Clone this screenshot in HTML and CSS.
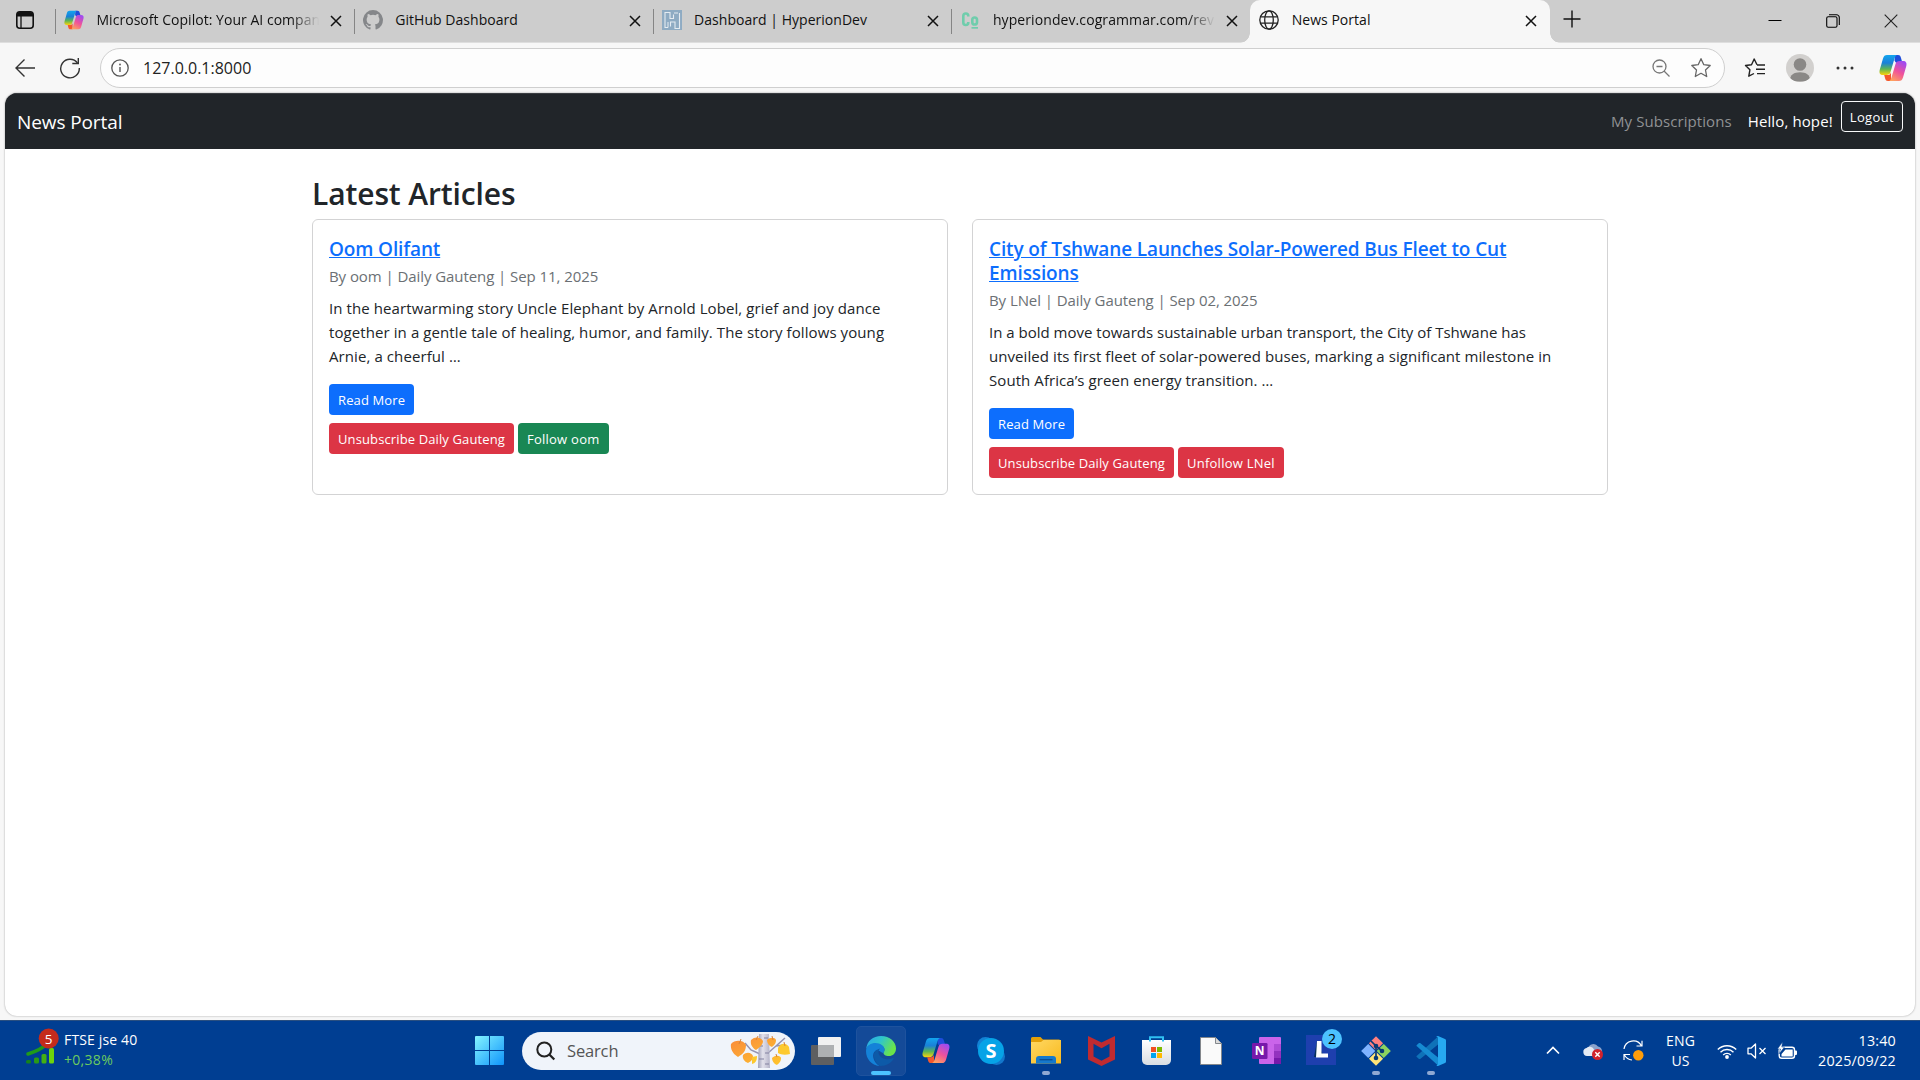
FILE: index.html
```html
<!DOCTYPE html>
<html lang="en">
<head>
<meta charset="utf-8">
<title>News Portal</title>
<link rel="stylesheet" href="styles.css">
</head>
<body>
<svg class="defs" width="0" height="0" aria-hidden="true">
  <defs>
    <linearGradient id="cpBlue" x1="0" y1="0" x2="0" y2="1"><stop offset="0" stop-color="#12a5ee"/><stop offset=".4" stop-color="#1a80d8"/><stop offset=".7" stop-color="#5cb554"/><stop offset="1" stop-color="#fcd20b"/></linearGradient>
    <linearGradient id="cpPink" x1="0.7" y1="0" x2="0.2" y2="1"><stop offset="0" stop-color="#a04bf0"/><stop offset=".5" stop-color="#f0529a"/><stop offset="1" stop-color="#ffa45c"/></linearGradient>
    <linearGradient id="win" x1="0" y1="0" x2="1" y2="1"><stop offset="0" stop-color="#84f4ff"/><stop offset="1" stop-color="#0f94fb"/></linearGradient>
    <linearGradient id="edgeTop" x1="0" y1="0" x2="1" y2=".4"><stop offset="0" stop-color="#2aa5ea"/><stop offset=".5" stop-color="#2fc5cc"/><stop offset="1" stop-color="#6be34a"/></linearGradient>
    <linearGradient id="folder" x1="0" y1="0" x2="1" y2="1"><stop offset="0" stop-color="#ffd863"/><stop offset="1" stop-color="#f8b91d"/></linearGradient>
    <linearGradient id="bag" x1="0" y1="0" x2="0" y2="1"><stop offset="0" stop-color="#fff"/><stop offset="1" stop-color="#d9dde2"/></linearGradient>
    <linearGradient id="leaf" x1="0" y1="0" x2="1" y2="1"><stop offset="0" stop-color="#f98a3c"/><stop offset="1" stop-color="#ffc52b"/></linearGradient>
    <linearGradient id="bark" x1="0" y1="0" x2="1" y2="0"><stop offset="0" stop-color="#9fa0b8"/><stop offset=".4" stop-color="#e3e2ec"/><stop offset="1" stop-color="#b4b3c8"/></linearGradient>
    <symbol id="copilot" viewBox="0 0 28 28">
      <path d="M16 1h3c2 0 2.500 1.200 3 3l1 3.500c.5 1.600 1.200 2 2 2h-5.500c-2 0-3-1-4-3z" fill="#1e4ddb"/>
      <path d="M8 1h10c-1.500.6-2 2-2.500 3.500L11.500 18c-.7 2.200-2 3-4 3H4c-3 0-4-2-3.300-5L4 4.500C4.700 2 6 1 8 1z" fill="url(#cpBlue)"/>
      <path d="M12 27H9c-2 0-2.500-1.200-3-3l-.8-3H8c2 0 3 0 4-2.500z" fill="#f4572d"/>
      <path d="M20 27H10c1.500-.6 2-2 2.500-3.500L16.500 10c.7-2.200 2-3 4-3H24c3 0 4 2 3.300 5L24 23.500c-.7 2.500-2 3.500-4 3.500z" fill="url(#cpPink)"/>
    </symbol>
    <symbol id="x" viewBox="0 0 12 12"><path d="M1 1l10 10M11 1L1 11" fill="none" stroke="currentColor" stroke-width="1.500"/></symbol>
  </defs>
</svg>

<header class="tabstrip">
  <div class="tab-actions"><svg width="20" height="20" viewBox="0 0 20 20"><rect x="1.800" y="1.800" width="16.400" height="16.400" rx="3" fill="none" stroke="#111" stroke-width="1.600"/><path d="M2 5a3 3 0 013-3h10a3 3 0 013 3v1.500H2z" fill="#111"/><path d="M6 6v12" stroke="#111" stroke-width="1.300"/></svg></div>
  <div class="tab">
    <svg class="fav" width="20" height="20"><use href="#copilot"/></svg>
    <span class="tab-title fade">Microsoft Copilot: Your AI compan</span>
    <svg class="close" width="12" height="12"><use href="#x"/></svg>
  </div>
  <div class="tab">
    <svg class="fav" width="20" height="20" viewBox="0 0 16 16"><path fill="#85878a" d="M8 0a8 8 0 00-2.530 15.590c.4.070.55-.17.55-.38v-1.490C4 14.090 3.480 13.220 3.320 12.770c-.09-.23-.48-.94-.82-1.130-.28-.15-.68-.52-.01-.53.630-.01 1.080.58 1.230.82.720 1.210 1.870.87 2.330.66.070-.52.280-.87.510-1.070-1.780-.2-3.640-.89-3.640-3.950 0-.87.310-1.590.82-2.150-.08-.2-.36-1.020.08-2.120 0 0 .670-.21 2.200.82a7.500 7.500 0 014 0c1.530-1.040 2.200-.82 2.200-.82.440 1.100.16 1.920.08 2.120.51.560.82 1.270.82 2.150 0 3.070-1.870 3.750-3.650 3.950.290.250.540.73.540 1.480v2.190c0 .21.150.46.550.38A8 8 0 008 0z"/></svg>
    <span class="tab-title">GitHub Dashboard</span>
    <svg class="close" width="12" height="12"><use href="#x"/></svg>
  </div>
  <div class="tab">
    <svg class="fav" width="20" height="20" viewBox="0 0 20 20"><path d="M0 0h20v20H0z" fill="#8eabc3"/><path d="M3 18V2.500h5v6h3.500V4.500M17.500 3v15.500H13v-6.500H8.500v4.500M12 3h4" fill="none" stroke="#e4ebf1" stroke-width="1.100"/><path d="M3 17.500h3V12" fill="none" stroke="#e4ebf1"/></svg>
    <span class="tab-title">Dashboard | HyperionDev</span>
    <svg class="close" width="12" height="12"><use href="#x"/></svg>
  </div>
  <div class="tab">
    <svg class="fav" width="20" height="20" viewBox="0 0 20 20"><g fill="none" stroke="#6fcdac" stroke-width="2.600"><path d="M8.300 6.500V6a2.500 2.500 0 00-5 0v6.500a2.500 2.500 0 005 0V12"/><rect x="12.300" y="7.500" width="4.700" height="7" rx="2.350"/></g><path d="M11.500 17h6.500v1.700h-6.500z" fill="#6fcdac"/></svg>
    <span class="tab-title fade wide">hyperiondev.cogrammar.com/revi</span>
    <svg class="close" width="12" height="12"><use href="#x"/></svg>
  </div>
  <div class="tab active">
    <svg class="fav" width="20" height="20" viewBox="0 0 20 20"><g fill="none" stroke="#222" stroke-width="1.300"><circle cx="10" cy="10" r="9.200"/><ellipse cx="10" cy="10" rx="4.300" ry="9.200"/><path d="M1.500 6.800h17M1.500 13.200h17"/></g></svg>
    <span class="tab-title">News Portal</span>
    <svg class="close" width="12" height="12"><use href="#x"/></svg>
  </div>
  <svg class="new-tab" width="18" height="18" viewBox="0 0 18 18"><path d="M9 .5v17M.5 9h17" stroke="#111" stroke-width="1.400"/></svg>
  <div class="window-buttons">
    <svg width="14" height="14" viewBox="0 0 14 14"><path d="M.5 6.500h13" stroke="#000"/></svg>
    <svg width="14" height="14" viewBox="0 0 14 14"><g fill="none" stroke="#000" stroke-width="1.100"><rect x=".7" y="2.700" width="10.300" height="10.600" rx="1.500"/><path d="M3 .8h7.500a2.800 2.800 0 012.800 2.800V11"/></g></svg>
    <svg width="14" height="14" viewBox="0 0 14 14"><path d="M.7.700l12.600 12.600M13.300.700L.7 13.300" stroke="#222" stroke-width="1.100"/></svg>
  </div>
</header>

<div class="toolbar">
  <svg class="back" width="22" height="20" viewBox="0 0 22 20"><path d="M10.500 1.500L2 10l8.500 8.500M2 10h19" fill="none" stroke="#333" stroke-width="1.400"/></svg>
  <svg class="reload" width="22" height="22" viewBox="0 0 22 22"><path d="M18.500 6A9.300 9.300 0 1020.300 11" fill="none" stroke="#333" stroke-width="1.400"/><path d="M19.300 1v5.500h-6" fill="none" stroke="#333" stroke-width="1.400"/></svg>
  <div class="address">
    <svg width="18" height="18" viewBox="0 0 18 18"><circle cx="9" cy="9" r="8.200" fill="none" stroke="#555" stroke-width="1.300"/><path d="M9 8v5" stroke="#555" stroke-width="1.400"/><circle cx="9" cy="5.500" r=".9" fill="#555"/></svg>
    <span class="url">127.0.0.1:8000</span>
    <svg class="zoom-out" width="18" height="18" viewBox="0 0 18 18"><g fill="none" stroke="#777" stroke-width="1.300"><circle cx="7.500" cy="7.500" r="6.500"/><path d="M12 12l5.500 5.500M4.500 7.500h6"/></g></svg>
    <svg width="22" height="22" viewBox="0 0 22 22"><path d="M11 1.700l2.800 6 6.400.8-4.700 4.500 1.200 6.500L11 16.300l-5.700 3.200 1.200-6.500L1.800 8.500l6.400-.8z" fill="none" stroke="#666" stroke-width="1.300" stroke-linejoin="round"/></svg>
  </div>
  <svg class="favorites" width="22" height="22" viewBox="0 0 22 22"><path d="M13 7.800L10.200 2 7.500 7.700l-6 .8 4.400 4.300-1.100 6.400L10 16.500M13 8h8M12 12.300h9M13 16.600h8" fill="none" stroke="#222" stroke-width="1.400" stroke-linejoin="round"/></svg>
  <svg class="avatar" width="28" height="28" viewBox="0 0 28 28"><defs><clipPath id="face"><circle cx="14" cy="14" r="14"/></clipPath></defs><g clip-path="url(#face)"><path d="M0 0h28v28H0z" fill="#d2d0ce"/><circle cx="14" cy="10.500" r="6.300" fill="#8a8886"/><path d="M4 26c0-5 4-7.700 10-7.700s10 2.700 10 7.700l-5 1.500H9z" fill="#8a8886"/></g></svg>
  <svg class="dots" width="18" height="4" viewBox="0 0 18 4"><g fill="#333"><circle cx="2" cy="2" r="1.500"/><circle cx="9" cy="2" r="1.500"/><circle cx="16" cy="2" r="1.500"/></g></svg>
  <svg width="28" height="28"><use href="#copilot"/></svg>
</div>

<main class="viewport">
  <nav class="navbar">
    <a class="brand">News Portal</a>
    <a class="nav-link">My Subscriptions</a>
    <span class="hello">Hello, hope!</span>
    <button class="btn btn-outline">Logout</button>
  </nav>
  <div class="container">
    <h2>Latest Articles</h2>
    <div class="row">
      <article class="card">
        <h5><a>Oom Olifant</a></h5>
        <p class="meta">By oom | Daily Gauteng | Sep 11, 2025</p>
        <p class="text loose">In the heartwarming story Uncle Elephant by Arnold Lobel, grief and joy dance<br>together in a gentle tale of healing, humor, and family. The story follows young<br>Arnie, a cheerful …</p>
        <a class="btn btn-primary">Read More</a>
        <div class="actions"><button class="btn btn-danger">Unsubscribe Daily Gauteng</button><button class="btn btn-success short">Follow oom</button></div>
      </article>
      <article class="card">
        <h5><a>City of Tshwane Launches Solar-Powered Bus Fleet to Cut<br>Emissions</a></h5>
        <p class="meta">By LNel | Daily Gauteng | Sep 02, 2025</p>
        <p class="text">In a bold move towards sustainable urban transport, the City of Tshwane has<br><span class="loose">unveiled its first fleet of solar-powered buses, marking a significant milestone in</span><br><span class="loose">South Africa’s green energy transition. …</span></p>
        <a class="btn btn-primary">Read More</a>
        <div class="actions"><button class="btn btn-danger">Unsubscribe Daily Gauteng</button><button class="btn btn-danger short">Unfollow LNel</button></div>
      </article>
    </div>
  </div>
</main>

<footer class="taskbar">
  <div class="widget">
    <svg width="34" height="38" viewBox="0 0 34 38"><path d="M2 27q13-4 20-11" fill="none" stroke="#1f9a1a" stroke-width="3.500" stroke-linecap="round"/><rect x="0" y="33" width="5" height="3.500" rx="1.500" fill="#15831b"/><rect x="8" y="30.500" width="5" height="6" rx="1.500" fill="#2a9a17"/><rect x="15.500" y="27" width="5" height="9.500" rx="1.500" fill="#44b012"/><rect x="23" y="21" width="5" height="15.500" rx="1.500" fill="#6ed40b"/><circle cx="22.700" cy="11.500" r="10" fill="#c42b1c"/><text x="22.700" y="16.500" text-anchor="middle" font-size="13.500" fill="#fff">5</text></svg>
    <div class="quote"><span>FTSE jse 40</span><span class="up">+0,38%</span></div>
  </div>
  <div class="apps">
    <div class="start"><svg width="29" height="29" viewBox="0 0 29 29"><path d="M1 0h13v14H0V1a1 1 0 011-1zM15 0h13a1 1 0 011 1v13H15zM0 15h14v14H1a1 1 0 01-1-1zM15 15h14v13a1 1 0 01-1 1H15z" fill="url(#win)"/></svg></div>
    <div class="search">
      <svg width="20" height="20" viewBox="0 0 20 20"><circle cx="8.300" cy="8.500" r="7" fill="none" stroke="#222" stroke-width="2"/><path d="M13.300 13.500l5 5" stroke="#222" stroke-width="2.300"/></svg>
      <span>Search</span>
      <svg class="birch" width="60" height="34" viewBox="0 0 60 34"><g fill="none" stroke="#9493b0" stroke-width="1.500"><path d="M30 20l-9-4-6-7M38 19l8-7 9-8M46 12l8-1"/></g><path d="M29 0h10l1 34H28z" fill="url(#bark)"/><path d="M34 4h4M29 12h4M35 19h4M29 25h5M35 30h4" stroke="#8281a0"/><g fill="url(#leaf)"><path d="M1 10c4-5 13-4 15 1 0 6-3 9-8 12C4 21 0 16 1 10zM21 6c4-4 10-3 12 1 0 4-4 7-7 9-3-2-6-5-5-10zM37 6c3-3 8-3 9 0 0 4-2 5-4 7-3-1-5-4-5-7zM13 21c4-4 9-2 10 1 0 4-3 6-5 7-3-1-6-4-5-8zM42 24c4-4 9-2 9 0 0 4-2 5-4 7-3-1-5-4-5-7z"/></g><path d="M48 14c3-6 9-5 11-1l1 7c-4 1-9 1-12-1zM22 23l5-1c0 4-1 7-5 8z" fill="#fdc92e"/><path d="M9 10l2-5M26 6l2-4M43 6l-1-4M55 12l-1-4M47 23l-1-3" stroke="#d8843c"/></svg>
    </div>
    <div class="app view"><svg width="30" height="28" viewBox="0 0 30 28"><rect x="0" y="8" width="23" height="20" rx="1" fill="#5e5f61"/><rect x="7" y="0" width="23" height="20" rx="1" fill="#f1f1f1"/><path d="M7 8h16v12H7z" fill="#aeb0b2"/></svg></div>
    <div class="app current"><svg width="30" height="30" viewBox="0 0 30 30"><path d="M.2 13C1 5 7 0 15 0c9 0 15 6 15 12.500 0 5-3.500 7.500-7 7.500-4 0-5.500-1.600-5.500-3 0-1 1-1.400 1-3.500C18.500 10 14 8 9.500 8 4 8 .8 11 .2 13z" fill="url(#edgeTop)"/><path d="M.2 13C1 9.500 5 7 9.500 7c5 0 9 3 9 6.500 0 2-1 2.500-1 3.500-2 0-3.500-3.500-8-2-4 2-3 11 4 14.900C5.500 29.500 0 23 0 15z" fill="#1482d8"/><path d="M9.800 14.200C6 18 8 27 14.500 30c6 0 10.500-3 13-7 .5-1-.3-1.200-1-.8C21 25 13 22 12.500 16.500c0-1.500.7-3 1.500-4z" fill="#0d5aa8"/></svg><i class="mark wide"></i></div>
    <div class="app"><svg width="28" height="27" viewBox="0 0 28 28" preserveAspectRatio="none"><use href="#copilot"/></svg></div>
    <div class="app"><svg width="28" height="28" viewBox="0 0 28 28"><circle cx="8.500" cy="8.500" r="8.500" fill="#1382d4"/><circle cx="19.500" cy="19.500" r="8.500" fill="#1277cc"/><circle cx="14" cy="14" r="13" fill="#06a3e7"/><text class="letter" x="14" y="21" text-anchor="middle" font-size="20" fill="#fff">S</text></svg></div>
    <div class="app"><svg width="30" height="27" viewBox="0 0 30 27"><path d="M0 1.500A1.500 1.500 0 011.500 0h8L12 2.500h16A1.500 1.500 0 0129.500 4v5H0z" fill="#e3a008"/><path d="M0 5h10l2.500-2H30v23.500H0z" fill="url(#folder)"/><path d="M5 26.500V22a3 3 0 013-3h14a3 3 0 013 3v4.500z" fill="#1579cc"/><path d="M8.500 22.700h13" stroke="#0b4c91" stroke-width="1.300"/></svg><i class="mark"></i></div>
    <div class="app"><svg width="27" height="30" viewBox="0 0 27 30"><path d="M0 0l13.500 6.500L27 0v23.500L13.500 30 0 23.500zM5.500 7.800v12.600l8 4.300 8-4.300V7.800l-8 4.500z" fill="#c02b30"/></svg></div>
    <div class="app"><svg width="29" height="29" viewBox="0 0 29 29"><path d="M8 6V1.200h13V6" fill="none" stroke="#2fc0f2" stroke-width="2"/><path d="M0 4h29v20a5 5 0 01-5 5H5a5 5 0 01-5-5z" fill="url(#bag)"/><path d="M8 5.500V2.500M21 5.500V2.500" stroke="#2fc0f2" stroke-width="2"/><path d="M9 11h5v5H9z" fill="#f25022"/><path d="M15 11h5v5h-5z" fill="#7fba00"/><path d="M9 17h5v5H9z" fill="#00a4ef"/><path d="M15 17h5v5h-5z" fill="#ffb900"/></svg></div>
    <div class="app"><svg width="22" height="28" viewBox="0 0 22 28"><path d="M.5.500h15l6 6v21H.5z" fill="#fafafa" stroke="#83878c"/><path d="M15.500.5v6h6" fill="#dcdcdc" stroke="#83878c"/></svg></div>
    <div class="app"><svg width="29" height="28" viewBox="0 0 29 28"><rect x="7" y="0" width="22" height="27" rx="1" fill="#ca64ea"/><path d="M22 7h7v7h-7z" fill="#ae4bd5"/><path d="M22 14h7v7h-7z" fill="#9332bf"/><path d="M22 21h7v6h-7z" fill="#7719aa"/><rect x="0" y="6" width="15.500" height="16" rx="1.200" fill="#7719aa"/><text class="letter" x="7.600" y="18.300" text-anchor="middle" font-size="12" fill="#fff">N</text></svg></div>
    <div class="app"><svg class="over" width="38" height="38" viewBox="0 0 38 38"><path d="M1 7h30v30H1z" fill="#1e3fae"/><path d="M12 13l-3 16h10z" fill="#07305a"/><path d="M12 13h4.500v12.500H23V29.500H11z" fill="#fff"/><circle cx="27" cy="11" r="10" fill="#4cc2ff"/><text x="27" y="16" text-anchor="middle" font-size="14" fill="#000">2</text></svg></div>
    <div class="app"><svg width="30" height="30" viewBox="0 0 30 30"><g transform="translate(15 15) rotate(45)"><path d="M-10.500-10.500h10v10h-10z" fill="#ff7f7f"/><path d="M.5-10.500h10v10H.5z" fill="#8cd25f"/><path d="M-10.500.5h10v10h-10z" fill="#80b3ff"/><path d="M.5.5h10v10H.5z" fill="#ffe478"/></g><path d="M10 5l5 5v12M15 10l6 5" fill="none" stroke="#083a75" stroke-width="1.700"/><g fill="#083a75"><circle cx="15" cy="10" r="2.300"/><circle cx="15" cy="22" r="2.300"/><circle cx="21" cy="15" r="2.300"/></g></svg><i class="mark"></i></div>
    <div class="app"><svg width="30" height="30" viewBox="0 0 30 30"><path d="M1.500 19.300L22 .5v8L4.500 22.700c-.6.500-1.300.5-1.800 0L.8 21.100c-.6-.5-.5-1.200.7-1.800z" fill="#0f72b8"/><path d="M1.500 10.700L22 29.500v-8L4.500 7.300c-.6-.5-1.300-.5-1.800 0L.8 8.900c-.6.5-.5 1.200.7 1.800z" fill="#168bd2"/><path d="M22 0l7 3c.6.300 1 .8 1 1.500v21c0 .7-.4 1.200-1 1.500l-7 3c-1 0-1.500-.5-2-1 1 .6 2 0 2-1.200V2.200C22 1 21 .5 20 1c.5-.6 1-1 2-1z" fill="#27a9f1"/></svg><i class="mark"></i></div>
  </div>
  <div class="tray">
    <svg width="14" height="9" viewBox="0 0 14 9"><path d="M1 7.500l6-6 6 6" fill="none" stroke="#fff" stroke-width="1.700"/></svg>
    <svg class="cloud" width="20" height="18" viewBox="0 0 20 18"><path d="M5 6.500a5.500 5.500 0 0110-2 5 5 0 012 9H7z" fill="#8ba3cc"/><path d="M4 14a4 4 0 01-.5-7.900 4.500 4.500 0 017.500 1.500l4 6.400z" fill="#e4eaf4"/><circle cx="14.500" cy="12.500" r="5.500" fill="#d1222c"/><path d="M12.300 10.300l4.400 4.400M16.700 10.300l-4.400 4.400" stroke="#fff" stroke-width="1.400"/></svg>
    <svg class="sync" width="21" height="21" viewBox="0 0 21 21"><path d="M1 9A9.300 9.300 0 0118.500 6M13.500 6H19V.700M1 20v-5.500h6M1.500 15A9.500 9.500 0 009 20" fill="none" stroke="#fff" stroke-width="1.200"/><circle cx="15.300" cy="15.300" r="5.200" fill="#ff9d0a"/></svg>
    <div class="lang"><span>ENG</span><span>US</span></div>
    <svg class="wifi" width="20" height="16" viewBox="0 0 20 16"><g fill="none" stroke="#fff" stroke-width="1.400"><path d="M.8 6.500a13 13 0 0118.400 0M3.500 9.200a9.200 9.200 0 0113 0M6.200 11.900a5.400 5.400 0 017.600 0"/></g><circle cx="10" cy="14" r="1.900" fill="#fff"/></svg>
    <svg class="sound" width="20" height="16" viewBox="0 0 20 16"><path d="M1 5.200h3L8.500 1v14L4 10.800H1z" fill="none" stroke="#fff" stroke-width="1.300" stroke-linejoin="round"/><path d="M12.500 5l6 6M18.500 5l-6 6" stroke="#fff" stroke-width="1.300"/></svg>
    <svg class="battery" width="21" height="18" viewBox="0 0 21 18"><rect x="2.200" y="5.200" width="15.300" height="11" rx="2.500" fill="none" stroke="#fff" stroke-width="1.400"/><path d="M4.500 14.500V12l4-4.500h7.200v7zM18 8.500h1a1 1 0 011 1V12a1 1 0 01-1 1h-1z" fill="#fff"/><path d="M5.500 0L.5 7h3L2 12l5.500-7H4.800z" fill="#fff" stroke="#003e92" stroke-width=".5"/></svg>
    <div class="clock"><span>13:40</span><span>2025/09/22</span></div>
  </div>
</footer>
</body>
</html>
```

FILE: styles.css
```css
* { box-sizing: border-box; }
html, body { margin: 0; height: 100%; overflow: hidden; }
body {
  width: 1920px;
  height: 1080px;
  display: flex;
  flex-direction: column;
  background: #f7f7f7;
  color: #212529;
  font: 15px "Open Sans", "Noto Sans", sans-serif;
  white-space: nowrap;
}
.defs { position: absolute; }
svg { display: block; flex: none; }
p, h2, h5 { margin: 0; }

/* Tab strip */
.tabstrip {
  height: 43px;
  flex: none;
  display: flex;
  align-items: stretch;
  background: #cdcdcd;
  border-bottom: 1px solid #dedede;
}
.tab-actions { width: 55px; padding: 10px 0 0 15px; }
.tab {
  width: 298.800px;
  flex: none;
  display: flex;
  align-items: flex-start;
  padding: 10px 12px 0 9px;
  background: linear-gradient(#858585, #858585) 0 9px / 1px 25px no-repeat;
}
.tab-title {
  flex: 1;
  margin: -1px 4px 0 12.500px;
  min-width: 0;
  font-size: 14px;
  line-height: 21px;
  letter-spacing: .03px;
  color: #111;
}
.fade { mask-image: linear-gradient(90deg, #000 85%, transparent 97%); }
.fade.wide { letter-spacing: .09px; }
.close { margin-top: 5px; color: #111; }
.tab.active {
  position: relative;
  width: 300px;
  height: 43px;
  background: #f7f7f7;
  border-radius: 10px 10px 0 0;
  padding-left: 9px;
  padding-right: 13px;
}
.tab.active::before, .tab.active::after {
  content: "";
  position: absolute;
  bottom: 0;
  width: 10px;
  height: 10px;
}
.tab.active::before { left: -10px; background: radial-gradient(circle at 0 0, transparent 9.500px, #f7f7f7 10px); }
.tab.active::after { right: -10px; background: radial-gradient(circle at 100% 0, transparent 9.500px, #f7f7f7 10px); }
.new-tab { margin: 10px 0 0 13px; }
.window-buttons { display: flex; gap: 44px; margin: 14px 22px 0 auto; }

/* Toolbar */
.toolbar {
  height: 50px;
  flex: none;
  display: flex;
  align-items: center;
  padding: 0 13px 0 14px;
}
.reload { margin-left: 23px; }
.address {
  width: 1625px;
  height: 40px;
  margin: 0 19px 0 19px;
  display: flex;
  align-items: center;
  padding: 0 12px 0 10px;
  background: #fdfdfd;
  border: 1px solid #cfcfcf;
  border-radius: 20px;
}
.url { flex: 1; margin-left: 14px; font-size: 16px; letter-spacing: 0; color: #222; }
.zoom-out { margin-right: 20px; }
.favorites { margin-right: 20px; }
.avatar { margin-right: 22px; }
.dots { margin-right: auto; }

/* Page */
.viewport {
  height: 923px;
  flex: none;
  margin: 0 5px;
  background: #fff;
  border-radius: 12px;
  overflow: hidden;
  box-shadow: 0 0 2px #999;
}
.navbar {
  height: 56px;
  display: flex;
  align-items: center;
  padding: 0 12px;
  background: #212529;
  border-top: 1px solid #3b3e42;
  color: #fff;
}
.brand { margin-right: auto; font-size: 19px; letter-spacing: -.1px; }
.nav-link { margin: -2px 16px 0 0; color: #909294; letter-spacing: .08px; }
.hello { margin: -2px 8px 0 0; letter-spacing: .12px; }
.btn {
  display: block;
  width: fit-content;
  height: 31px;
  padding: 1px 8px 0;
  border: 1px solid transparent;
  border-radius: 4px;
  font: 13px/28px "Open Sans", "Noto Sans", sans-serif;
  letter-spacing: .12px;
  color: #fff;
}
.btn.short { letter-spacing: .25px; }
.btn-outline { border-color: #f8f9fa; background: none; align-self: flex-start; margin-top: 7px; letter-spacing: .35px; }
.btn-primary { background: #0d6efd; }
.btn-danger { background: #dc3545; }
.btn-success { background: #198754; }
.container { width: 1296px; margin: 24px auto 0; }
h2 { font-size: 30px; font-weight: 600; line-height: 38px; letter-spacing: -.12px; padding-top: 2px; margin-bottom: 6px; }
.row { display: grid; grid-template-columns: 1fr 1fr; gap: 24px; }
.card { height: 276px; padding: 17px 16px 16px; border: 1px solid #d3d3d4; border-radius: 6px; }
h5 { font-size: 19px; font-weight: 600; line-height: 24px; letter-spacing: -.13px; }
h5 a { color: #0d6efd; text-decoration: underline; }
.meta { margin: 3px 0 8px; line-height: 24px; letter-spacing: -.07px; color: #6b7074; }
.text { line-height: 24px; margin-bottom: 16px; }
.loose { letter-spacing: .09px; }
span.loose { letter-spacing: .075px; }
.actions { display: flex; gap: 4px; margin-top: 8px; }

/* Taskbar */
.taskbar {
  height: 60px;
  margin-top: auto;
  flex: none;
  display: grid;
  grid-template-columns: 462px 1fr 380px;
  background: #003e92;
  border-top: 1px solid #2a4f80;
  color: #fff;
  font-size: 14px;
}
.widget { display: flex; padding: 6px 0 0 26px; gap: 4px; }
.quote, .lang, .clock { display: flex; flex-direction: column; line-height: 20px; }
.quote { padding-top: 3px; letter-spacing: .15px; }
.up { color: #6ccb5f; letter-spacing: .3px; }
.apps { display: flex; align-items: center; }
.start { width: 60px; padding-left: 13px; }
.search {
  width: 273px;
  height: 38px;
  margin-right: 6px;
  display: flex;
  align-items: center;
  padding: 0 5px 0 14px;
  border-radius: 19px;
  background: #f0f4fa;
  color: #555;
  font-size: 16.500px;
}
.search span { flex: 1; margin-left: 11px; letter-spacing: -.15px; }
.app {
  position: relative;
  width: 50px;
  height: 50px;
  margin-right: 5px;
  flex: none;
  display: flex;
  align-items: center;
  justify-content: center;
}
.view { margin-right: 5px; }
.current { background: #144a98; border: 1px solid #1e529d; border-radius: 5px; }
.over { margin: -8px 0 0 6px; }
.mark {
  position: absolute;
  bottom: 1px;
  left: calc(50% - 4px);
  width: 8px;
  height: 4px;
  border-radius: 2px;
  background: #8fa9d3;
}
.mark.wide { bottom: 0; left: calc(50% - 10px); width: 20px; background: #4cc2ff; }
.letter { font-weight: 700; }
.tray { display: flex; align-items: center; padding: 0 24px 0 6px; }
.cloud { margin-left: 23px; }
.sync { margin-left: 20px; }
.lang { margin-left: 22px; text-align: center; letter-spacing: .2px; }
.wifi { margin-left: 22px; }
.sound { margin-left: 10px; }
.battery { margin-left: 10px; }
.clock { margin-left: auto; text-align: right; font-size: 14.300px; letter-spacing: .2px; }
```
